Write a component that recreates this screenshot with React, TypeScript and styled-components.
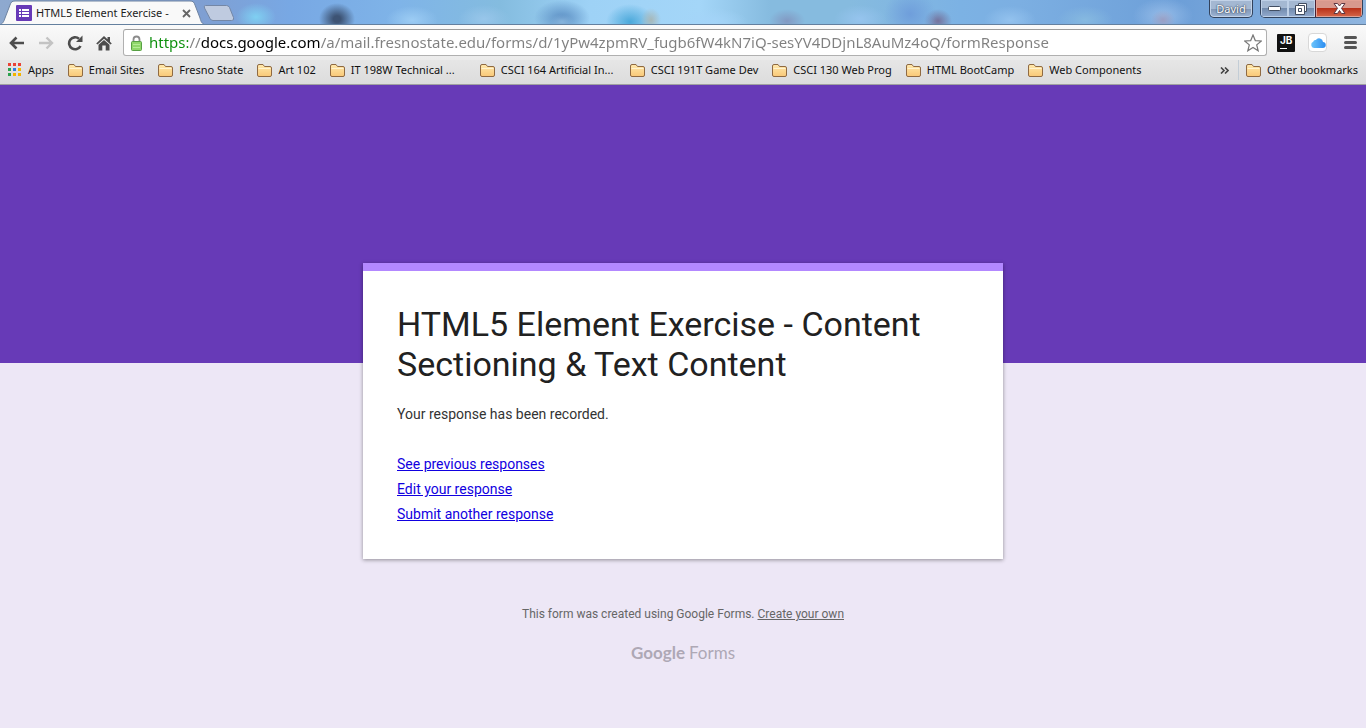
import React from "react";
import styled, { createGlobalStyle } from "styled-components";

const uiFont = `"Noto Sans", "Open Sans", sans-serif`;

const GlobalStyle = createGlobalStyle`
  *, *::before, *::after { box-sizing: border-box; }
  html, body { margin: 0; min-height: 100%; background: #ede7f6; }
  body { font-family: Roboto, sans-serif; }
  button { padding: 0; border: 0; background: none; font: inherit; color: inherit; }
  svg { display: block; flex: none; }
`;

const TitleBar = styled.div`
  display: flex;
  align-items: flex-start;
  height: 25px;
  overflow: hidden;
  border-bottom: 1px solid #64809f;
  background:
    radial-gradient(ellipse 20px 14px at 256px 17px, #7fd0f2, #7fd0f200),
    radial-gradient(ellipse 18px 16px at 337px 19px, #3d5374 20%, #3d537400),
    radial-gradient(ellipse 26px 14px at 412px 20px, #9cccf4, #9cccf400),
    radial-gradient(ellipse 26px 14px at 484px 19px, #98c6ea, #98c6ea00),
    radial-gradient(ellipse 12px 8px at 562px 22px, #86b4dc, #86b4dc00),
    radial-gradient(ellipse 28px 18px at 562px 18px, #5c8fc4, #5c8fc400),
    radial-gradient(ellipse 10px 12px at 651px 20px, #a8b8b8, #a8b8b800),
    radial-gradient(ellipse 24px 18px at 630px 22px, #4aa8da, #4aa8da00),
    radial-gradient(ellipse 36px 14px at 712px 22px, #a4d4f8, #a4d4f800),
    radial-gradient(ellipse 18px 12px at 787px 21px, #8299c2, #8299c200),
    radial-gradient(ellipse 26px 14px at 860px 19px, #96c4ee, #96c4ee00),
    radial-gradient(ellipse 26px 24px at 910px 14px, #6f9edb, #6f9edb00),
    radial-gradient(ellipse 14px 12px at 938px 21px, #74729c, #74729c00),
    radial-gradient(ellipse 26px 14px at 1010px 20px, #93c2ee, #93c2ee00),
    radial-gradient(ellipse 28px 14px at 1085px 20px, #86b9e0, #86b9e000),
    radial-gradient(ellipse 12px 10px at 1163px 20px, #9a9fc4, #9a9fc400),
    radial-gradient(ellipse 30px 18px at 1163px 16px, #96bce8, #96bce800),
    linear-gradient(90deg, #8ea9cf 0, #7f9fd2 200px, #78a8e4 290px, #7fb4e8 400px, #84bcdf 500px, #9ed2f6 590px, #a4d6f8 700px, #86bbdf 770px, #86bbdf 850px, #7cb2e4 960px, #7cafe2 1020px, #6d9fd8 1180px, #8fb5df 1366px);
`;

const Tab = styled.div`
  position: relative;
  display: flex;
  align-items: center;
  width: 206px;
  height: 25px;
  padding: 1px 12px 0 16px;
`;

const TabShape = styled.svg`
  position: absolute;
  inset: 0;
`;

const TabTitle = styled.span`
  position: relative;
  flex: 1;
  margin-left: 4px;
  overflow: hidden;
  white-space: pre;
  font: 11px/20px ${uiFont};
  color: #1d1d1d;
`;

const TabIcon = styled.svg`
  position: relative;
`;

const TabClose = styled.button`
  position: relative;
  margin-right: 3px;
`;

const NewTab = styled.button`
  margin: 5px auto 0 -4px;
`;

const AccountButton = styled.button`
  width: 44px;
  height: 18px;
  margin-right: 7px;
  border: 1px solid #32425c;
  border-top: 0;
  border-radius: 0 0 5px 5px;
  background: linear-gradient(#a4b8d2 0 9px, #8197b6 9px, #9db5d5);
  box-shadow: inset 0 0 0 1px #c3d3e8;
  font: 11px/16px ${uiFont};
  color: #fff;
  text-shadow: 0 0 1px #2c3850, 0 0 2px #2c3850;
`;

const WindowControls = styled.div`
  display: flex;
  height: 18px;
  margin-right: 3px;
  border: 1px solid #32425c;
  border-top: 0;
  border-radius: 0 0 5px 5px;
  overflow: hidden;
`;

const WindowButton = styled.button<{ $close?: boolean }>`
  display: flex;
  align-items: center;
  justify-content: center;
  width: ${(p) => (p.$close ? 47 : 27)}px;
  height: 17px;
  border-left: ${(p) => (p.$close ? "1px solid #4c2030" : "0")};
  box-shadow: inset 0 0 0 1px ${(p) => (p.$close ? "#e0a093" : "#bed0e7")};
  background: ${(p) =>
    p.$close
      ? "linear-gradient(#d8998d 0 8px, #b82f17 8px, #d5674a)"
      : "linear-gradient(#a4b8d2 0 8px, #7089ab 8px, #93abcf)"};
`;

const Toolbar = styled.div`
  display: flex;
  align-items: center;
  height: 35px;
  padding: 0 9px 0 7px;
  background: linear-gradient(#fafafa, #ebebeb);
`;

const NavButton = styled.button`
  display: flex;
  justify-content: center;
  width: 29px;
  &:first-child { width: 20px; margin-right: 4px; }
`;

const AddressBar = styled.label`
  display: flex;
  flex: 1;
  align-items: center;
  height: 27px;
  margin: 0 9px 0 5px;
  padding: 0 4px 0 6px;
  border: 1px solid #b0b0b0;
  border-top-color: #9c9c9c;
  border-radius: 3px;
  background: #fff;
`;

const AddressInput = styled.input`
  flex: 1;
  min-width: 0;
  height: 25px;
  margin-left: 6px;
  padding: 0;
  border: 0;
  outline: 0;
  font: 15px/25px ${uiFont};
  color: transparent;
  background: linear-gradient(90deg, #0b8f0b 0 39px, #808080 39px 52px, #000 52px 172px, #808080 172px);
  background-clip: text;
  -webkit-background-clip: text;
`;

const ExtensionButton = styled.button`
  width: 20px;
  margin-right: 12px;
`;

const MenuButton = styled.button`
  margin-left: 4px;
`;

const JetBrainsTile = styled.span`
  display: block;
  width: 18px;
  height: 18px;
  margin: 0 1px;
  padding: 2px 2px 0 3px;
  border-radius: 1px;
  background: #111;
  font: 700 10px/9px Inter, sans-serif;
  color: #fff;
  text-align: left;
  &::after { content: ""; display: block; width: 7px; height: 1px; margin-top: 3px; background: #fff; }
`;

const CloudTile = styled.span`
  display: flex;
  align-items: center;
  justify-content: center;
  width: 19px;
  height: 19px;
  border: 1px solid #d8d8d8;
  border-radius: 4px;
  background: #fff;
`;

const BookmarksBar = styled.nav`
  display: flex;
  align-items: center;
  height: 25px;
  padding: 0 8px 4px 8px;
  border-bottom: 1px solid #a0a0a0;
  background: linear-gradient(#e6e6e6, #dcdcdc);
  white-space: nowrap;
`;

const Bookmark = styled.a<{ $long?: boolean }>`
  display: flex;
  align-items: center;
  gap: 6px;
  width: ${(p) => (p.$long ? "136px" : "auto")};
  margin-right: 14px;
  font: 11px/18px ${uiFont};
  color: #111;
  text-decoration: none;
  &:last-child { margin-right: 0; }
`;

const Overflow = styled.button`
  margin: 0 9px 0 auto;
`;

const Divider = styled.span`
  width: 1px;
  height: 20px;
  margin-right: 7px;
  background: #c3cdd6;
`;

const Banner = styled.div`
  height: 278px;
  background: #673ab7;
`;

const Card = styled.main`
  position: relative;
  max-width: 640px;
  min-height: 296px;
  margin: -100px auto 0;
  padding: 33px 34px 32px;
  border-top: 8px solid #b388ff;
  background: #fff;
  box-shadow: 0 1px 4px rgba(0, 0, 0, 0.4);
`;

const FormTitle = styled.h1`
  margin: 0;
  font: 400 34px/40px Roboto, sans-serif;
  color: #212121;
`;

const Message = styled.p`
  margin: 20px 0 0;
  font-size: 14px;
  line-height: 20px;
  color: #333;
`;

const Links = styled.ul`
  margin: 28px 0 0;
  padding: 0;
  list-style: none;
  font-size: 14px;
  line-height: 25px;
  a { color: #1100e0; }
`;

const Footer = styled.footer`
  display: flex;
  flex-direction: column;
  align-items: center;
  margin-top: 45px;
  font-size: 12px;
  line-height: 20px;
  color: #666;
  a { color: inherit; }
`;

const Logo = styled.div`
  display: flex;
  gap: 4px;
  margin-top: 17px;
  font: 17px/24px Lato, sans-serif;
  color: #aea8b5;
`;

const LogoBrand = styled.span`
  font-weight: 700;
`;

const bookmarks = [
  "Email Sites",
  "Fresno State",
  "Art 102",
  "IT 198W Technical ...",
  "CSCI 164 Artificial In...",
  "CSCI 191T Game Dev",
  "CSCI 130 Web Prog",
  "HTML BootCamp",
  "Web Components",
];

const appColors = ["#ea4335", "#ea4335", "#ea4335", "#2ba24c", "#2f7de1", "#f4b400", "#2ba24c", "#f4b400", "#f4b400"];

const Folder = () => (
  <svg width="15" height="13" viewBox="0 0 15 13">
    <defs>
      <linearGradient id="folder" x2="0" y2="1">
        <stop stopColor="#ffe9ad" />
        <stop offset="1" stopColor="#f9c878" />
      </linearGradient>
    </defs>
    <path d="M.5 11V2Q.5.5 2 .5h4L7.500 2.500h5.500Q14.500 2.500 14.500 4v7q0 1.500-1.500 1.500H2Q.5 12.500.5 11z" fill="url(#folder)" stroke="#8f6a42" />
    <path d="M1.500 4.500h12" stroke="#fff3cf" />
  </svg>
);

const dark = "#4d4d4d";

export default function App() {
  return (
    <>
      <GlobalStyle />
      <header>
        <TitleBar>
          <Tab>
            <TabShape width="206" height="25" viewBox="0 0 206 25">
              <path d="M-1 25C3 24 4 21 5 18L10 5C11 2 12 1 15 1h175c3 0 4 1 5 4l5 13c1 4 2 6 6 7z" fill="#f9f9f9" stroke="#6e83a1" />
            </TabShape>
            <TabIcon width="16" height="16" viewBox="0 0 16 16">
              <rect width="16" height="16" rx="1" fill="#673ab7" />
              <path d="M3 4h2v2H3zM6 4h7v2H6zM3 7h2v2H3zM6 7h7v2H6zM3 10h2v2H3zM6 10h7v2H6z" fill="#fff" />
            </TabIcon>
            <TabTitle>HTML5 Element Exercise - </TabTitle>
            <TabClose aria-label="Close tab">
              <svg width="9" height="9" viewBox="0 0 9 9"><path d="M1 1l7 7M8 1L1 8" stroke="#666" strokeWidth="1.800" /></svg>
            </TabClose>
          </Tab>
          <NewTab aria-label="New tab">
            <svg width="33" height="16" viewBox="0 0 33 16">
              <path d="M3.500.5h21q2 0 3 2l4 10q1 3-2 3H11q-2 0-3-2L2.500 3Q1.500.5 3.500.5z" fill="#bfcbe0" stroke="#7487a6" />
            </svg>
          </NewTab>
          <AccountButton>David</AccountButton>
          <WindowControls>
            <WindowButton aria-label="Minimize">
              <svg width="13" height="6" viewBox="0 0 13 6"><rect x=".5" y=".5" width="12" height="4" rx="1" fill="#fff" stroke="#424e62" /></svg>
            </WindowButton>
            <WindowButton aria-label="Restore">
              <svg width="13" height="12" viewBox="0 0 13 12" fill="#fff" stroke="#424e62">
                <path d="M3.500.5h8v8h-8z" />
                <path fillRule="evenodd" d="M.5 2.500h9v9h-9zM3.500 5.500v3h3v-3z" />
              </svg>
            </WindowButton>
            <WindowButton $close aria-label="Close">
              <svg width="13" height="11" viewBox="0 0 13 11">
                <path d="M1 .5h3.500l2 2.500 2-2.500H12L8.500 5.300 12 10.500H8.500l-2-3-2 3H1l3.500-5.200z" fill="#fff" stroke="#5d3742" />
              </svg>
            </WindowButton>
          </WindowControls>
        </TitleBar>
        <Toolbar>
          <NavButton aria-label="Back">
            <svg width="18" height="16" viewBox="0 0 18 16" fill="none" stroke={dark} strokeWidth="2.600"><path d="M16 8H4M8.500 2.500L3 8l5.500 5.500" /></svg>
          </NavButton>
          <NavButton aria-label="Forward">
            <svg width="18" height="16" viewBox="0 0 18 16" fill="none" stroke="#c3c3c3" strokeWidth="2.400"><path d="M2 8h12M9.500 2.500L15 8l-5.500 5.500" /></svg>
          </NavButton>
          <NavButton aria-label="Reload">
            <svg width="16" height="16" viewBox="0 0 16 16" fill="none" stroke={dark} strokeWidth="2.600"><path d="M13.500 11A6 6 0 1 1 12 3.700" /><path d="M15.500.5v6.500H9z" fill={dark} stroke="none" /></svg>
          </NavButton>
          <NavButton aria-label="Home">
            <svg width="16" height="16" viewBox="0 0 16 16" fill={dark}><path d="M8 1l3.500 3.300V2H14v4.700L15.800 8.500l-1.300 1L8 3.800 1.500 9.500l-1.300-1z" /><path d="M8 5l5.500 4.700V15.500H9.700V10.500H6.300v5H2.500V9.700z" /></svg>
          </NavButton>
          <AddressBar>
            <svg width="13" height="16" viewBox="0 0 13 16">
              <path d="M3.500 7V4.500a3 3 0 0 1 6 0V7" fill="none" stroke="#8b8b8b" strokeWidth="1.800" />
              <rect x="1.500" y="6.500" width="10" height="9" rx="1" fill="#8fd66a" stroke="#57a044" />
              <path d="M3 9.500h7M3 12.500h7" stroke="#b4ec96" />
            </svg>
            <AddressInput aria-label="Address" defaultValue="https://docs.google.com/a/mail.fresnostate.edu/forms/d/1yPw4zpmRV_fugb6fW4kN7iQ-sesYV4DDjnL8AuMz4oQ/formResponse" />
            <svg width="18" height="18" viewBox="0 0 18 18"><path d="M9 1l2.300 5.600 6 .4-4.600 3.900 1.500 5.900L9 13.500l-5.200 3.300 1.500-5.900L.7 7l6-.4z" fill="#fff" stroke="#777" strokeWidth="1.200" /></svg>
          </AddressBar>
          <ExtensionButton aria-label="JetBrains"><JetBrainsTile>JB</JetBrainsTile></ExtensionButton>
          <ExtensionButton aria-label="iCloud">
            <CloudTile>
              <svg width="16" height="12" viewBox="0 0 16 12">
                <defs><linearGradient id="cloud" x2="1"><stop stopColor="#6cc5fb" /><stop offset="1" stopColor="#2b8cf0" /></linearGradient></defs>
                <path d="M4 11a3.300 3.300 0 0 1-.8-6.300A2.300 2.300 0 0 1 5.800 3 4 4 0 0 1 13 5a3 3 0 0 1-.5 6z" fill="url(#cloud)" />
              </svg>
            </CloudTile>
          </ExtensionButton>
          <MenuButton aria-label="Menu">
            <svg width="13" height="13" viewBox="0 0 13 13"><path d="M1.500 1.500h10M1.500 6.500h10M1.500 11.500h10" stroke="#555" strokeWidth="3" strokeLinecap="round" /></svg>
          </MenuButton>
        </Toolbar>
        <BookmarksBar>
          <Bookmark href="#">
            <svg width="14" height="14" viewBox="0 0 14 14">
              {appColors.map((c, i) => <rect key={i} x={(i % 3) * 5} y={Math.floor(i / 3) * 5} width="3" height="3" fill={c} />)}
            </svg>
            Apps
          </Bookmark>
          {bookmarks.map((b) => <Bookmark key={b} href="#" $long={b.endsWith("...")}><Folder />{b}</Bookmark>)}
          <Overflow aria-label="More bookmarks">
            <svg width="9" height="7" viewBox="0 0 9 7" fill="none" stroke="#444" strokeWidth="1.600"><path d="M1 .5l3 3-3 3M5 .5l3 3-3 3" /></svg>
          </Overflow>
          <Divider />
          <Bookmark href="#"><Folder />Other bookmarks</Bookmark>
        </BookmarksBar>
      </header>
      <Banner />
      <Card>
        <FormTitle>HTML5 Element Exercise - Content Sectioning &amp; Text Content</FormTitle>
        <Message>Your response has been recorded.</Message>
        <Links>
          <li><a href="#">See previous responses</a></li>
          <li><a href="#">Edit your response</a></li>
          <li><a href="#">Submit another response</a></li>
        </Links>
      </Card>
      <Footer>
        <div>This form was created using Google Forms. <a href="#">Create your own</a></div>
        <Logo><LogoBrand>Google</LogoBrand><span>Forms</span></Logo>
      </Footer>
    </>
  );
}
